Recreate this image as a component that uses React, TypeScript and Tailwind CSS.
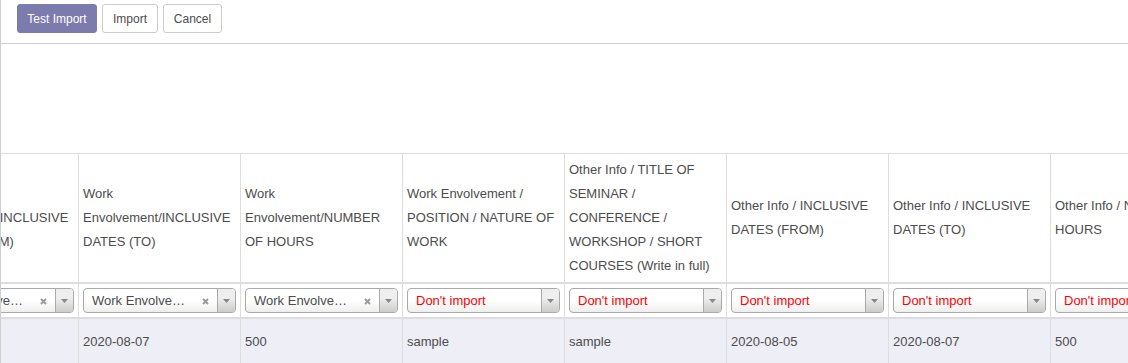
import React from "react";

type Col = { head: string[]; sel: string; mapped: boolean; data: string };

const cols: Col[] = [
  { head: ["Work", "Envolvement/INCLUSIVE", "DATES (FROM)"], sel: "Work Envolvement/INCLUSIVE DATES (FROM)", mapped: true, data: "2020-08-05" },
  { head: ["Work", "Envolvement/INCLUSIVE", "DATES (TO)"], sel: "Work Envolvement/INCLUSIVE DATES (TO)", mapped: true, data: "2020-08-07" },
  { head: ["Work", "Envolvement/NUMBER", "OF HOURS"], sel: "Work Envolvement/NUMBER OF HOURS", mapped: true, data: "500" },
  { head: ["Work Envolvement /", "POSITION / NATURE OF", "WORK"], sel: "Don't import", mapped: false, data: "sample" },
  { head: ["Other Info / TITLE OF", "SEMINAR /", "CONFERENCE /", "WORKSHOP / SHORT", "COURSES (Write in full)"], sel: "Don't import", mapped: false, data: "sample" },
  { head: ["Other Info / INCLUSIVE", "DATES (FROM)"], sel: "Don't import", mapped: false, data: "2020-08-05" },
  { head: ["Other Info / INCLUSIVE", "DATES (TO)"], sel: "Don't import", mapped: false, data: "2020-08-07" },
  { head: ["Other Info / NUMBER OF", "HOURS"], sel: "Don't import", mapped: false, data: "500" },
];

function Select({ col }: { col: Col }) {
  return (
    <div className="flex h-[25px] w-full items-stretch overflow-hidden rounded-[4px] border border-[#aaa] bg-[linear-gradient(to_top,#eee_0%,#fff_50%)]">
      <div className="flex min-w-0 flex-1 items-center overflow-hidden pl-[8px] pr-[6px]">
        <span className={`block w-full truncate whitespace-nowrap ${col.mapped ? "text-[#4c4c4c]" : "text-[#ff0000]"}`}>{col.sel}</span>
      </div>
      {col.mapped && (
        <div className="mr-[6px] flex w-[12px] items-center justify-center pt-[2px]">
          <svg width="7" height="7" viewBox="0 0 7 7">
            <path d="M1 1 L6 6 M6 1 L1 6" stroke="#999" strokeWidth="1.9" strokeLinecap="butt" />
          </svg>
        </div>
      )}
      <div className="flex w-[18px] items-center justify-center border-l border-[#aaa] bg-[linear-gradient(to_top,#ccc_0%,#eee_60%)]">
        <svg width="7" height="4" viewBox="0 0 7 4">
          <path d="M0 0 L7 0 L3.5 4 Z" fill="#888" />
        </svg>
      </div>
    </div>
  );
}

export default function App() {
  return (
    <div
      className="relative h-[363px] w-[1128px] overflow-hidden border-l border-[#cfcfcf] bg-white text-[13px] text-[#4c4c4c]"
      style={{ fontFamily: '"Liberation Sans", Arial, sans-serif' }}
    >
      <div className="flex h-[44px] items-start gap-[5px] border-b border-[#cfcfcf] pl-[16px] pt-[4px]">
        <button className="h-[29px] w-[80px] rounded-[3px] border border-[#7c7bad] bg-[#7c7bad] text-[12px] text-white">Test Import</button>
        <button className="h-[29px] w-[56px] rounded-[3px] border border-[#ccc] bg-white text-[12px] text-[#4c4c4c]">Import</button>
        <button className="h-[29px] w-[59px] rounded-[3px] border border-[#ccc] bg-white text-[12px] text-[#4c4c4c]">Cancel</button>
      </div>
      <div className="h-[109px]" />
      <div className="overflow-hidden border-t border-[#ddd]">
        <div className="ml-[-84px] w-[1296px]">
          <div className="flex h-[130px] border-b-2 border-[#ddd]">
            {cols.map((c, i) => (
              <div key={i} className="flex w-[162px] shrink-0 flex-col justify-center border-r border-[#ddd] px-[4px] leading-[24px]">
                {c.head.map((l, j) => (
                  <div key={j} className="whitespace-nowrap">{l}</div>
                ))}
              </div>
            ))}
          </div>
          <div className="flex h-[35px] border-b-2 border-[#ddd]">
            {cols.map((c, i) => (
              <div key={i} className="flex w-[162px] shrink-0 items-start border-r border-[#ddd] px-[4px] pt-[4px]">
                <Select col={c} />
              </div>
            ))}
          </div>
          <div className="flex h-[60px] bg-[#eeeef6]">
            {cols.map((c, i) => (
              <div key={i} className="w-[162px] shrink-0 border-r border-[#ddd] px-[4px] pb-[12px] pt-[13px] leading-[20px]">
                {c.data}
              </div>
            ))}
          </div>
        </div>
      </div>
    </div>
  );
}
